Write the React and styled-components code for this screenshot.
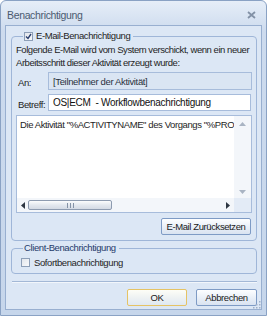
import styled, { createGlobalStyle } from 'styled-components';

const Global = createGlobalStyle`
  html, body {
    margin: 0;
    padding: 0;
    background: #ffffff;
  }
  body {
    font-family: "Liberation Sans", Arial, sans-serif;
    font-size: 9.5px;
    letter-spacing: -0.4px;
    color: #1e1e1e;
  }
`;

const Window = styled.div`
  width: 267px;
  height: 316px;
  box-sizing: border-box;
  border: 1px solid #8aa2c4;
  border-radius: 6px 6px 0 0;
  background: linear-gradient(#e6eef8, #cddbee 30px, #c6d6eb);
  display: flex;
  flex-direction: column;
`;

const TitleBar = styled.div`
  flex: none;
  height: 24px;
  box-sizing: border-box;
  display: flex;
  align-items: center;
  justify-content: space-between;
  padding: 4px 8px 0 6px;
  font-size: 10.5px;
  letter-spacing: -0.35px;
  color: #4a5a70;
`;

const CloseIcon = styled.svg`
  width: 9px;
  height: 8px;
  margin-right: 2px;
`;

const Client = styled.div`
  flex: 1;
  min-height: 0;
  margin: 0 4px 5px 4px;
  border: 1px solid #98afd0;
  background: #dce7f5;
  padding: 4px 4px 0 5px;
  display: flex;
  flex-direction: column;
  position: relative;
`;

const Group = styled.fieldset`
  margin: ${p => p.$mt || '0'} 0 0 0;
  padding: ${p => p.$pad || '0 4px 5px 4px'};
  border: 1px solid #9fb6d8;
  border-radius: 4px;
  min-width: 0;
`;

const Legend = styled.legend`
  padding: 0 3px 0 1px;
  margin-left: 7px;
  display: flex;
  align-items: center;
  gap: 3px;
  color: ${p => p.$blue ? '#1f3a6a' : '#1e1e1e'};
  line-height: 12px;
`;

const Box = styled.span`
  width: 9px;
  height: 9px;
  box-sizing: border-box;
  border: 1px solid #8d9fb8;
  background: linear-gradient(135deg, #e2e6ec, #f8f9fb);
  display: inline-flex;
  align-items: center;
  justify-content: center;
  flex: none;
`;

const Intro = styled.div`
  margin: 1px 0 0 0;
  line-height: 13px;
  white-space: nowrap;
  letter-spacing: -0.45px;
`;

const FieldRow = styled.div`
  display: flex;
  align-items: center;
  margin-top: ${p => p.$top || '4px'};
`;

const Label = styled.div`
  width: 30px;
  flex: none;
  padding-left: 2px;
  padding-top: 3px;
  white-space: nowrap;
`;

const Field = styled.div`
  flex: 1;
  height: ${p => p.$h || '17px'};
  box-sizing: border-box;
  border: 1px solid #a7bcdb;
  background: ${p => p.$readonly ? '#dae5f3' : '#ffffff'};
  padding: 0 4px;
  display: flex;
  align-items: center;
  white-space: nowrap;
  font-size: ${p => p.$readonly ? '9.5px' : '10px'};
  letter-spacing: ${p => p.$readonly ? '-0.35px' : '-0.3px'};
  color: ${p => p.$readonly ? '#2a3240' : '#111'};
  margin-right: ${p => p.$mr || '0'};
`;

const Memo = styled.div`
  margin-top: 4px;
  height: 98px;
  box-sizing: border-box;
  border: 1px solid #a7bcdb;
  background: #fff;
  display: grid;
  grid-template-columns: 1fr 17px;
  grid-template-rows: 1fr 14px;
`;

const MemoText = styled.div`
  padding: 3px 0 0 3px;
  white-space: pre;
  overflow: hidden;
  font-size: 9.5px;
  letter-spacing: -0.4px;
`;

const VScroll = styled.div`
  background: #f3f6fa;
  display: flex;
  flex-direction: column;
  justify-content: space-between;
  align-items: center;
  padding: 6px 0 4px;
`;

const HScroll = styled.div`
  background: #f3f6fa;
  display: flex;
  align-items: center;
  padding: 0 4px 0 4px;
  gap: 2px;
`;

const Corner = styled.div`
  background: #e3ebf6;
`;

const Thumb = styled.div`
  width: 84px;
  height: 10px;
  box-sizing: border-box;
  border: 1px solid #8d9bb0;
  border-radius: 2px;
  background: linear-gradient(#fbfcfd, #e3e8ef 50%, #d3dae4);
  display: flex;
  align-items: center;
  justify-content: center;
  margin-left: 1px;
`;

const Grip = styled.div`
  width: 5px;
  height: 5px;
  border-left: 1px solid #8492a6;
  border-right: 1px solid #8492a6;
  position: relative;
  &::after {
    content: '';
    position: absolute;
    left: 2px;
    top: 0;
    width: 1px;
    height: 5px;
    background: #8492a6;
  }
`;

const Track = styled.div`
  flex: 1;
`;

const ButtonRow = styled.div`
  display: flex;
  justify-content: flex-end;
  gap: 9px;
  margin-top: ${p => p.$top || '5px'};
  padding-right: ${p => p.$pr || '0'};
`;

const Button = styled.div`
  width: ${p => p.$w};
  height: 17px;
  box-sizing: border-box;
  border: 1px solid ${p => p.$default ? '#e5c365' : '#7e9bc5'};
  border-radius: 2px;
  background: ${p => p.$default
    ? 'linear-gradient(#fdfdf7, #eef2f3 50%, #dfe8f2)'
    : 'linear-gradient(#fdfeff, #eaf0f8 50%, #d9e3f1)'};
  display: flex;
  align-items: center;
  justify-content: center;
  white-space: nowrap;
  color: #1a1a1a;
`;

const CheckRow = styled.div`
  display: flex;
  align-items: center;
  gap: 4px;
  margin: 3px 0 0 5px;
`;

const Separator = styled.div`
  height: 1px;
  background: #a3b8d6;
  margin: 7px 0 0 1px;
  border-bottom: 1px solid #f2f6fb;
`;

const Grippy = styled.svg`
  position: absolute;
  right: 0;
  bottom: 0;
  width: 9px;
  height: 9px;
`;

const Arrow = ({ dir }) => {
  const pts = {
    up: '0,4 3.5,0 7,4',
    down: '0,0 3.5,4 7,0',
    left: '4,0 0,3.5 4,7',
    right: '0,0 4,3.5 0,7',
  }[dir];
  const vert = dir === 'up' || dir === 'down';
  const fill = vert ? '#a9b4c3' : '#2d3642';
  return (
    <svg width={vert ? 7 : 4} height={vert ? 4 : 7}>
      <polygon points={pts} fill={fill} />
    </svg>
  );
};

export default function App() {
  return (
    <>
      <Global />
      <Window>
        <TitleBar>
          <span>Benachrichtigung</span>
          <CloseIcon viewBox="0 0 9 8">
            <path d="M1 1 L8 7 M8 1 L1 7" stroke="#8291a6" strokeWidth="1.8" />
          </CloseIcon>
        </TitleBar>
        <Client>
          <Group>
            <Legend>
              <Box>
                <svg width="7" height="7" viewBox="0 0 7 7">
                  <path d="M1 3.5 L3 5.5 L6 1" stroke="#2a3f6e" strokeWidth="1.4" fill="none" />
                </svg>
              </Box>
              E-Mail-Benachrichtigung
            </Legend>
            <Intro>
              Folgende E-Mail wird vom System verschickt, wenn ein neuer<br />
              Arbeitsschritt dieser Aktivität erzeugt wurde:
            </Intro>
            <FieldRow $top="3px">
              <Label>An:</Label>
              <Field $readonly $h="18px">[Teilnehmer der Aktivität]</Field>
            </FieldRow>
            <FieldRow $top="4px">
              <Label>Betreff:</Label>
              <Field $mr="1px">OS|ECM&nbsp; - Workflowbenachrichtigung</Field>
            </FieldRow>
            <Memo>
              <MemoText>Die Aktivität "%ACTIVITYNAME" des Vorgangs "%PROCESSNAME" wurde gestartet.</MemoText>
              <VScroll>
                <Arrow dir="up" />
                <Arrow dir="down" />
              </VScroll>
              <HScroll>
                <Arrow dir="left" />
                <Thumb><Grip /></Thumb>
                <Track />
                <Arrow dir="right" />
              </HScroll>
              <Corner />
            </Memo>
            <ButtonRow $top="5px" $pr="1px">
              <Button $w="90px">E-Mail Zurücksetzen</Button>
            </ButtonRow>
          </Group>
          <Group $pad="0 4px 5px 4px" $mt="1px">
            <Legend $blue>Client-Benachrichtigung</Legend>
            <CheckRow>
              <Box />
              Sofortbenachrichtigung
            </CheckRow>
          </Group>
          <Separator />
          <ButtonRow $top="6px">
            <Button $w="60px" $default>OK</Button>
            <Button $w="61px">Abbrechen</Button>
          </ButtonRow>
          <Grippy viewBox="0 0 9 9">
            {[[7, 1], [7, 4], [4, 4], [7, 7], [4, 7], [1, 7]].map(([x, y]) => (
              <rect key={`${x}-${y}`} x={x} y={y} width="1.5" height="1.5" fill="#9fb0c8" />
            ))}
          </Grippy>
        </Client>
      </Window>
    </>
  );
}
